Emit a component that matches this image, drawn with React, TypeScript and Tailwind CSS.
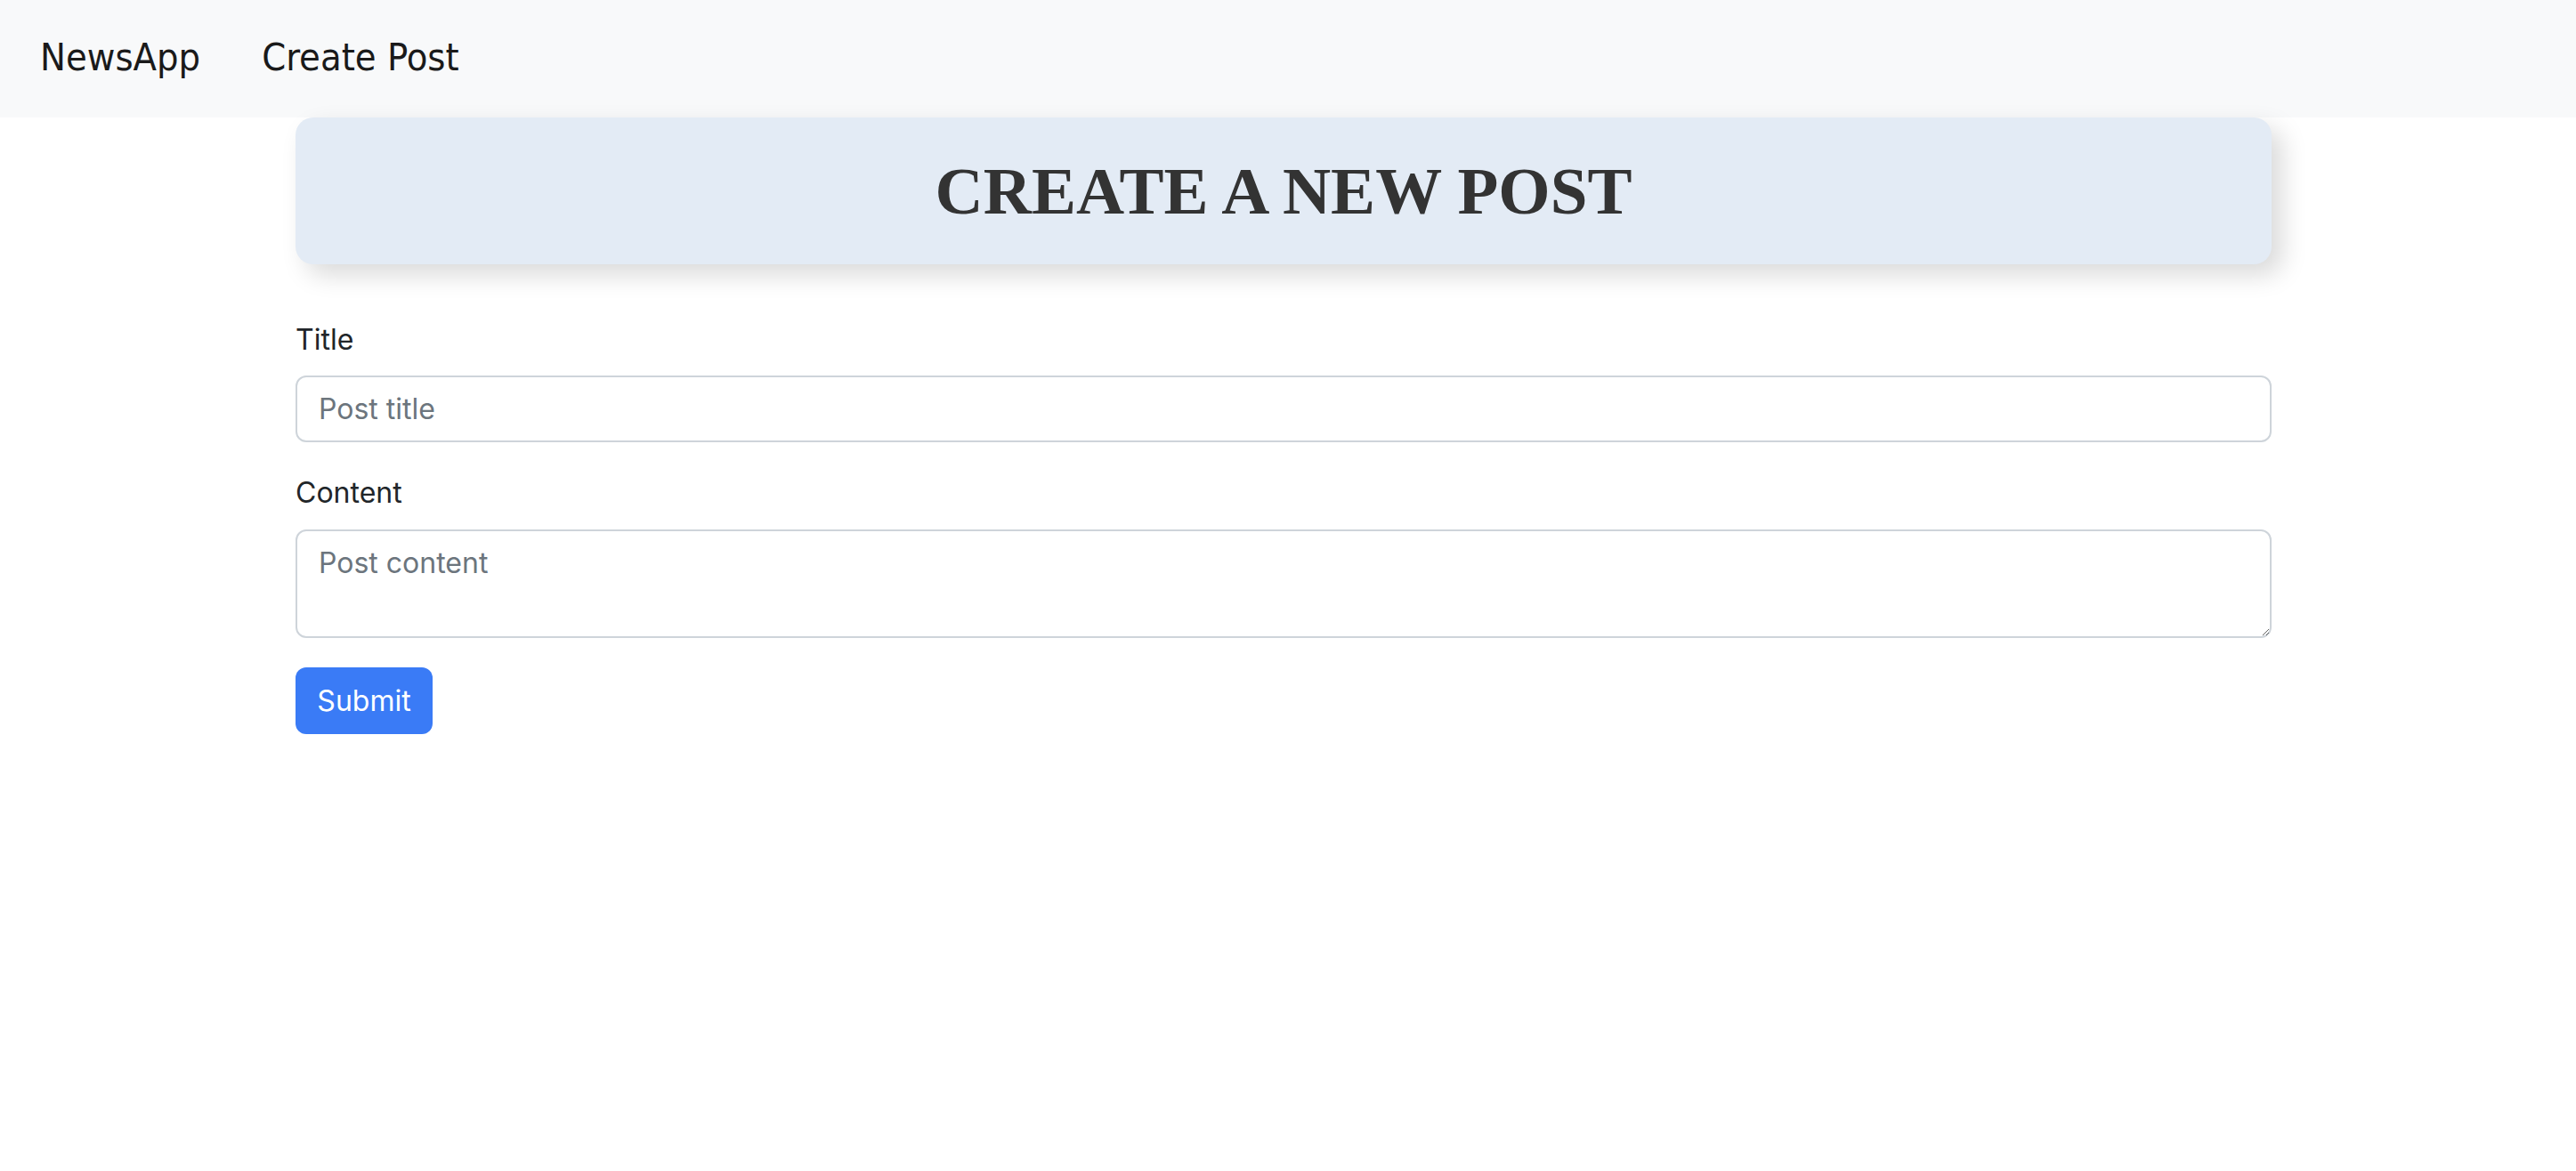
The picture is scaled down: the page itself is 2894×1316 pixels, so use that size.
export default function App() {
  return (
    <main className="min-h-screen bg-white">
      {/* Navbar */}
      <nav className="h-[132px] bg-[#f8f9fa] flex items-center pl-[45px] gap-[69px] text-[43px] text-[#1a1a1a] font-['DejaVu_Sans_Condensed','DejaVu_Sans',sans-serif] [font-stretch:condensed]">
        <span className="-translate-y-[2px]">NewsApp</span>
        <span className="-translate-y-[2px]">Create Post</span>
      </nav>

      <div className="ml-[332px] w-[2220px] font-['Inter','Liberation_Sans',sans-serif] text-[32px] leading-[48px]">
        {/* Header card */}
        <div className="h-[165px] rounded-[20px] bg-[#e3ebf5] shadow-[12px_12px_28px_rgba(0,0,0,0.15)] flex items-center justify-center">
          <h1 className="text-[75px] font-bold text-[#333333] font-['Liberation_Serif',serif] leading-none">
            CREATE A NEW POST
          </h1>
        </div>

        <form className="pt-[61px] flex flex-col">
          <label className="text-[#212529] mb-[16px]">Title</label>
          <input
            type="text"
            placeholder="Post title"
            className="h-[75px] border-2 border-[#ced4da] rounded-[12px] px-[24px] text-[#212529] placeholder:text-[#6c757d] outline-none"
          />

          <label className="text-[#212529] mt-[33px] mb-[17px]">Content</label>
          <textarea
            placeholder="Post content"
            className="h-[122px] border-2 border-[#ced4da] rounded-[12px] px-[24px] py-[12px] text-[#212529] placeholder:text-[#6c757d] outline-none"
          />

          <div className="mt-[33px]">
            <button
              type="button"
              className="h-[75px] w-[154px] rounded-[12px] bg-[#3a7bf6] text-white"
            >
              Submit
            </button>
          </div>
        </form>
      </div>
    </main>
  )
}
